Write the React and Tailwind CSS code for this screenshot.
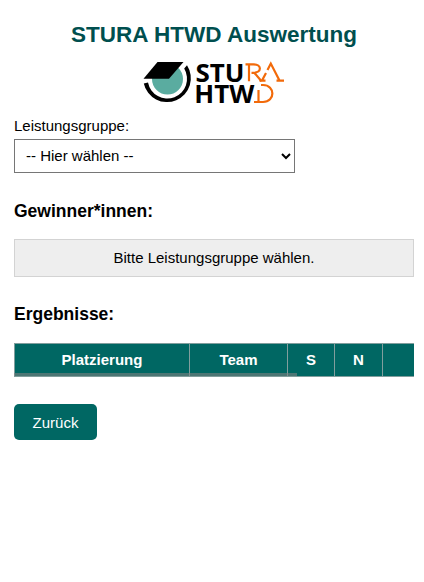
const columns = [
  { label: "Platzierung", width: "w-[174px]" },
  { label: "Team", width: "w-[97px]" },
  { label: "S", width: "w-[46px]" },
  { label: "N", width: "w-[47px]" },
  { label: "", width: "w-[40px]" },
];

function Logo() {
  return (
    <svg className="block h-[46px] w-[144px] overflow-visible" viewBox="0 0 144 46" role="img" aria-label="StuRa HTWD">
      <circle cx="25.5" cy="19" r="15.5" fill="#5aaca0" />
      <path d="M15.5 2H41.5L27 18.8H1.5Z" fill="#000" />
      <path d="M1.8 23.4A23.8 23.8 0 1 0 45 5.3L42.2 8.6A19.7 19.7 0 1 1 6 22.6Z" fill="#000" />
      <g fontFamily="'Noto Sans', sans-serif" fontWeight="700" fontSize="25.5">
        <text x="53.5" y="21.5" textLength="49" lengthAdjust="spacingAndGlyphs">STU</text>
        <text x="52.3" y="42.8" textLength="60" lengthAdjust="spacingAndGlyphs">HTW</text>
      </g>
      <g fill="none" stroke="#f26a0a" strokeWidth="2.2">
        <path d="M107 4V21.3M103.5 4.4H111.5C120 4.4 120 12.8 111.5 12.8H109.5M112.5 13 119.5 21.3" />
        <path d="M117.5 20.6H123.5M120 20.6 124 13M125.5 10 128.8 3.6 137.5 20.6M134.5 20.6H142" />
        <path d="M119 25H121C133.5 25 133.5 42 121 42H112M116.5 30V42" />
      </g>
    </svg>
  );
}

export default function App() {
  return (
    <main className="h-[582px] overflow-hidden bg-white pl-[14px] pr-[10px] font-['Liberation_Sans',Arial,sans-serif] text-[15px] leading-[18px] text-black">
      <h1 className="pt-[22px] text-center text-[22.5px] font-bold leading-[26px] text-[#004f4f]">
        STURA HTWD Auswertung
      </h1>
      <div className="mt-[12px] flex justify-center">
        <Logo />
      </div>
      <label htmlFor="group" className="mt-[11px] block">Leistungsgruppe:</label>
      <select
        id="group"
        className="mt-[4px] block h-[34px] w-[281px] border border-[#767676] bg-white px-[7px] pb-px text-[15px]"
      >
        <option>-- Hier wählen --</option>
      </select>
      <h2 className="mt-[28px] text-[17.5px] font-bold leading-[20px]">Gewinner*innen:</h2>
      <div className="mt-[18px] flex h-[38px] items-center justify-center border border-[#d3d3d3] bg-[#eee]">
        Bitte Leistungsgruppe wählen.
      </div>
      <h2 className="mt-[27px] text-[17.5px] font-bold leading-[20px]">Ergebnisse:</h2>
      <div className="relative mt-[19px] h-[34px] overflow-hidden">
        <div className="flex h-full w-max border-y border-l border-[#819e9d] bg-[#006763] text-white">
          {columns.map((column, index) => (
            <div
              key={index}
              className={`${column.width} box-content flex items-center justify-center border-r border-[#819e9d] font-bold`}
            >
              {column.label}
            </div>
          ))}
        </div>
        <div className="absolute bottom-px left-0 h-[3px] w-[283px] bg-[#808080]/60" />
      </div>
      <button className="mt-[27px] block h-[36px] w-[83px] rounded-[5px] bg-[#006763] pt-px text-center text-[15px] text-white">
        Zurück
      </button>
    </main>
  );
}
